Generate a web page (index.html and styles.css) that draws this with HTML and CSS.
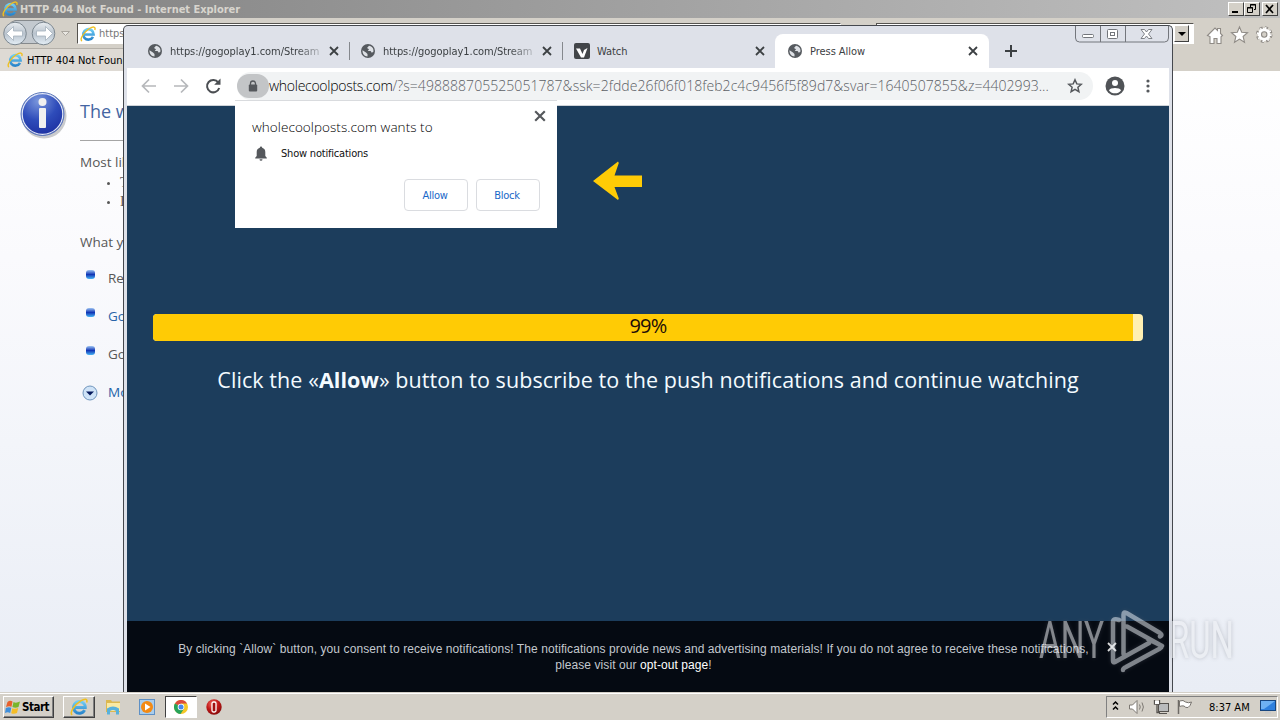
FILE: index.html
```
<!DOCTYPE html>
<html lang="en">
  <head>
    <meta charset="utf-8">
    <title>Press Allow</title>
    <link rel="stylesheet" href="styles.css">
  </head>
  <body>
    <!-- shared icons -->
    <svg class="sprite" width="0" height="0">
      <defs>
        <linearGradient id="ieBlue" x1="0" y1="0" x2="0" y2="1">
          <stop offset="0" stop-color="#6fcdf5"/>
          <stop offset="1" stop-color="#2a86cc"/>
        </linearGradient>
        <radialGradient id="infoBlue" cx="0.4" cy="0.2" r="0.9">
          <stop offset="0" stop-color="#7b97dc"/>
          <stop offset="0.5" stop-color="#2e4cba"/>
          <stop offset="1" stop-color="#1a2a9c"/>
        </radialGradient>
        <linearGradient id="navBtn" x1="0" y1="0" x2="0" y2="1">
          <stop offset="0" stop-color="#e9edf1"/>
          <stop offset="0.5" stop-color="#b9c3cd"/>
          <stop offset="1" stop-color="#e4eef6"/>
        </linearGradient>
        <radialGradient id="operaRed" cx="0.4" cy="0.3" r="0.8">
          <stop offset="0" stop-color="#f06a60"/>
          <stop offset="0.5" stop-color="#c01818"/>
          <stop offset="1" stop-color="#780808"/>
        </radialGradient>
      </defs>
      <symbol id="ie" viewBox="0 0 16 16">
        <path d="M13 10.8A5.2 5.2 0 1 1 13.6 8.5H4" fill="none" stroke="url(#ieBlue)" stroke-width="2.6"/>
        <path d="M2 15C-1 13.500 4 6 9.500 2.500 13 .4 16 .3 14.800 4" fill="none" stroke="#f0c020" stroke-width="1.400"/>
      </symbol>
      <symbol id="globe" viewBox="0 0 14 14">
        <circle cx="7" cy="7" r="7" fill="#565a5f"/>
        <path d="M1.500 6.200 5 8.500 6.500 10v2.500C3.500 12.300 1.300 9.800 1.500 6.200zM8 1.700 6 4l2 1.200L6.800 7h2.800l1.200 1.700 1.600-1C13 4.600 11 2 8 1.700z" fill="#dee1e6"/>
      </symbol>
      <symbol id="close" viewBox="0 0 10 10">
        <path d="M1 1l8 8M9 1L1 9" stroke="currentColor" stroke-width="1.800"/>
      </symbol>
    </svg>

    <div class="desktop">
      <div class="ie">
        <div class="ie-title">
          <svg class="ie-icon" width="16" height="16"><use href="#ie"/></svg>
          <span class="ie-caption">HTTP 404 Not Found - Internet Explorer</span>
          <div class="win-btns">
            <div class="win-btn"><svg width="12" height="10"><path d="M2 8h6" stroke="#000" stroke-width="2"/></svg></div>
            <div class="win-btn"><svg width="12" height="10" fill="none" stroke="#000"><path d="M4.500 3V.5h5v5H8M4 1h6M1.500 3.500h5v5h-5zM1 4h6"/></svg></div>
            <div class="win-btn win-btn-close"><svg width="12" height="10"><path d="M2 1l7 8M9 1L2 9" stroke="#000" stroke-width="1.700"/></svg></div>
          </div>
        </div>
        <div class="ie-nav">
          <svg class="ie-arrows" width="74" height="30">
            <path d="M15 2.500h27a12 12 0 0 1 0 23H15a12 12 0 0 1 0-23z" fill="#c3c9cf" stroke="#85898c"/>
            <circle cx="15" cy="15.500" r="11.300" fill="url(#navBtn)" stroke="#7c8790"/>
            <circle cx="43.500" cy="15.500" r="11.300" fill="url(#navBtn)" stroke="#7c8790"/>
            <path d="M6.500 15.500l7-7v4.500h9v5h-9v4.500zM52.500 15.500l-7-7v4.500h-9v5h9v4.500z" fill="#fff" stroke="#a5b1bd" stroke-width=".8"/>
            <path d="M61.500 13.500h8l-4 4z" fill="#e9e7e2" stroke="#aaa69f"/>
          </svg>
          <div class="ie-field ie-address">
            <svg width="16" height="16"><use href="#ie"/></svg>
            <span>https</span>
          </div>
          <div class="ie-field ie-search">
            <div class="ie-drop"></div>
          </div>
          <svg class="ie-tools" width="70" height="22" fill="#fff" stroke="#8f8b86" stroke-width="1.100">
            <path d="M2.500 11.500L10 4l2.500 2.500V4.500h3v5l2 2-1.500 1.200v6.800h-4v-5H9v5H5v-7z"/>
            <path d="M34.500 3l2.200 5.300 5.800.4-4.400 3.800 1.400 5.700-5-3.100-5 3.100 1.400-5.700-4.400-3.800 5.800-.4z"/>
            <circle cx="59.200" cy="10.500" r="6.500" stroke-width="3.600" stroke-dasharray="2.800 2.300"/>
            <circle cx="59.200" cy="10.500" r="4.500" fill="none" stroke="#fff" stroke-width="3"/>
            <circle cx="59.200" cy="10.500" r="6.200" fill="none" stroke="#fff" stroke-width="2.600" stroke-dasharray="1.500 3.370"/>
            <circle cx="59.200" cy="10.500" r="2.700" fill="#d4d0c8"/>
          </svg>
        </div>
        <div class="ie-tabs">
          <div class="ie-tab">
            <svg width="16" height="16"><use href="#ie"/></svg>
            <span>HTTP 404 Not Found</span>
          </div>
        </div>
        <div class="ie-page">
          <svg class="info-icon" width="48" height="50">
            <circle cx="24" cy="25" r="22.500" fill="#b3b5b8" opacity=".7"/>
            <circle cx="22.500" cy="23" r="21.500" fill="url(#infoBlue)" stroke="#5d79b9"/>
            <circle cx="22.500" cy="23" r="20.300" fill="none" stroke="#e2e8f6" stroke-width="1.200"/>
            <circle cx="22.500" cy="11" r="4" fill="#f0f0f0"/>
            <rect x="19" y="17" width="7" height="20" rx="1" fill="#f0f0f0"/>
          </svg>
          <div class="ie-text">
            <h1>The webpage cannot be found</h1>
            <p class="likely">Most likely causes:</p>
            <ul class="causes">
              <li>There might be a typing error in the address.</li>
              <li>If you clicked on a link, it may be out of date.</li>
            </ul>
            <p class="try">What you can try:</p>
            <div class="option"><i class="bullet"></i><span>Retype the address.</span></div>
            <div class="option"><i class="bullet"></i><a>Go back to the previous page.</a></div>
            <div class="option"><i class="bullet"></i><span>Go to the main site.</span></div>
            <div class="option">
              <svg class="more-icon" width="16" height="16"><circle cx="8" cy="8" r="7" fill="#cfe3f7" stroke="#7196bd"/><path d="M4 6.500h8l-4 4z" fill="#05195c"/></svg>
              <a class="more">More information</a>
            </div>
          </div>
        </div>
      </div>

      <div class="chrome">
        <svg class="caption-btns" width="95" height="17" fill="none" stroke="#73767c">
          <path d="M.5 0v12q0 4 4 4h85q4 0 4-4V0M25.500 0v16M50.500 0v16" />
          <rect x="7.500" y="8.500" width="11" height="3" rx="1" fill="#fff"/>
          <rect x="32.500" y="3.500" width="10" height="9" rx="1" fill="#fff"/>
          <rect x="35.500" y="6.500" width="4" height="3"/>
          <path d="M66 3.500h3.500L71.500 6l2-2.500H77L73.500 8l3.500 4.500h-3.500l-2-2.500-2 2.500H66L69.500 8z" fill="#fff" stroke-width=".9"/>
        </svg>
        <div class="tabs">
          <div class="tab">
            <svg width="14" height="14"><use href="#globe"/></svg>
            <span class="tab-title faded">https://gogoplay1.com/Stream</span>
            <svg class="tab-close" width="10" height="10"><use href="#close"/></svg>
          </div>
          <div class="tab">
            <svg width="14" height="14"><use href="#globe"/></svg>
            <span class="tab-title faded">https://gogoplay1.com/Stream</span>
            <svg class="tab-close" width="10" height="10"><use href="#close"/></svg>
          </div>
          <div class="tab">
            <svg width="16" height="16"><rect width="16" height="16" rx="2" fill="#424549"/><path d="M2 5.500h4L8.500 11 10 7l3.500-2L10 14.500H7z" fill="#fff"/></svg>
            <span class="tab-title tab-title-watch">Watch</span>
            <svg class="tab-close" width="10" height="10"><use href="#close"/></svg>
          </div>
          <div class="tab active">
            <svg width="14" height="14"><use href="#globe"/></svg>
            <span class="tab-title">Press Allow</span>
            <svg class="tab-close" width="10" height="10"><use href="#close"/></svg>
          </div>
          <svg class="new-tab" width="12" height="12"><path d="M6 0v12M0 6h12" stroke="#3c4043" stroke-width="2"/></svg>
        </div>
        <div class="toolbar">
          <svg class="nav-icons" width="82" height="18" fill="none" stroke-width="1.700">
            <path d="M16 9H3M9 2.500L2.500 9 9 15.500M34 9h13M41 2.500L47.500 9 41 15.500" stroke="#b6b8bb"/>
            <path d="M78.300 5.500A6.200 6.200 0 1 0 79.200 11" stroke="#4b4e52" stroke-width="2"/>
            <path d="M80.500 1.500v6.300h-6.300z" fill="#4b4e52"/>
          </svg>
          <div class="omnibox">
            <div class="lock">
              <svg width="10" height="12"><path d="M2.500 5V3.500a2.500 2.500 0 0 1 5 0V5" fill="none" stroke="#55585c" stroke-width="1.300"/><rect x=".8" y="4.500" width="8.400" height="7" rx="1" fill="#55585c"/></svg>
            </div>
            <div class="url"><span class="host">wholecoolposts.com</span><span class="query">/?s=498888705525051787&amp;ssk=2fdde26f06f018feb2c4c9456f5f89d7&amp;svar=1640507855&amp;z=4402993...</span></div>
            <svg class="star" width="16" height="16"><path d="M8 1.800l1.800 4.100 4.500.4-3.400 3 1 4.400L8 11.400l-3.900 2.300 1-4.400-3.400-3 4.500-.4z" fill="none" stroke="#55585c" stroke-width="1.500"/></svg>
          </div>
          <svg class="avatar" width="20" height="20"><circle cx="10" cy="10" r="9.500" fill="#505357"/><circle cx="10" cy="7" r="3" fill="#fff"/><path d="M4 14.500c1-3.200 11-3.200 12 0-3 3.800-9 3.800-12 0z" fill="#fff"/></svg>
          <svg class="kebab" width="4" height="14" fill="#55585c"><circle cx="2" cy="2" r="1.600"/><circle cx="2" cy="7" r="1.600"/><circle cx="2" cy="12" r="1.600"/></svg>
        </div>
        <div class="page">
          <svg class="arrow" width="50" height="40"><path d="M0 20L25 .5l.8 1.500L21.500 14.500H49V26H21.500l4.300 11.500-.8 1.500z" fill="#ffcb05"/></svg>
          <div class="progress">
            <div class="progress-fill"></div>
            <span class="progress-label">99%</span>
          </div>
          <p class="message">Click the «<b>Allow</b>» button to subscribe to the push notifications and continue watching</p>
          <div class="consent">
            <p>By clicking `Allow` button, you consent to receive notifications! The notifications provide news and advertising materials! If you do not agree to receive these notifications,<br>please visit our <a>opt-out page</a>!</p>
            <svg class="consent-close" width="10" height="10"><use href="#close"/></svg>
          </div>
        </div>
        <div class="prompt">
          <svg class="prompt-close" width="12" height="12" viewBox="0 0 10 10"><use href="#close"/></svg>
          <div class="prompt-title">wholecoolposts.com wants to</div>
          <div class="prompt-row">
            <svg width="12" height="15"><path d="M6 .5a1.200 1.200 0 0 1 1.200 1.200C9.300 2.300 10.300 4 10.300 6v4l1.500 1.800v.7H.2v-.7L1.700 10V6c0-2 1-3.700 3.100-4.300A1.200 1.200 0 0 1 6 .5zM4.500 13.200h3a1.500 1.500 0 0 1-3 0z" fill="#55585c"/></svg>
            <span>Show notifications</span>
          </div>
          <div class="prompt-actions">
            <button>Allow</button>
            <button>Block</button>
          </div>
        </div>
      </div>

      <div class="taskbar">
        <div class="start">
          <svg width="16" height="16"><path d="M2.500 3Q5 .8 7.500 2.500L6.500 7.700Q4 6.500 1 8z" fill="#e8602c"/><path d="M8.500 3Q11 4.500 15 2.500L13.500 8Q10.500 9.600 7.400 8z" fill="#79b52c"/><path d="M.8 9Q4 7.500 6.300 8.800L5.200 14Q2.700 12.700 0 14z" fill="#3f8fdb"/><path d="M7.300 9.200Q10 10.500 13.200 9L12 14Q9 15.500 6.200 14.200z" fill="#f5bd26"/></svg>
          <span>Start</span>
        </div>
        <div class="task task-ie"><svg width="18" height="18" viewBox="0 0 16 16"><use href="#ie"/></svg></div>
        <svg class="task-folder" width="16" height="16"><path d="M1 1h5l1 1.500h8V13H1z" fill="#dcb850"/><path d="M2 4h13v8H2z" fill="#f9e9a3"/><path d="M2 15.500V9.500Q8 5.500 14 9.500v6h-3V12q-3-2-6 0v3.500z" fill="#58b1dc"/></svg>
        <svg class="task-media" width="16" height="16"><rect x=".5" y=".5" width="15" height="15" fill="#a9cdec" stroke="#5e90c5"/><circle cx="8" cy="8" r="6" fill="#f38a13"/><path d="M6 4.500v7L11.500 8z" fill="#fff"/></svg>
        <div class="task pressed">
          <svg width="14" height="14"><circle cx="7" cy="7" r="7" fill="#f5c727"/><path d="M7 7L.9 3.500a7 7 0 0 1 12.200 0H7z" fill="#dc4a3d"/><path d="M7 7L.9 3.500A7 7 0 0 0 6.500 14L10 8.700z" fill="#27a35a"/><circle cx="7" cy="7" r="3.300" fill="#fff"/><circle cx="7" cy="7" r="2.500" fill="#4687ed"/></svg>
        </div>
        <svg class="task-opera" width="16" height="16"><circle cx="8" cy="8" r="7.700" fill="url(#operaRed)"/><rect x="6" y="3" width="4" height="10" rx="1.500" fill="#a01010" stroke="#fff" stroke-width="1.300"/></svg>
        <div class="tray">
          <svg width="84" height="18" fill="none">
            <path d="M2 6.500l2.500-2.500L7 6.500M2 11.500L4.500 9 7 11.500" stroke="#000" stroke-width="1.500"/>
            <path d="M18.500 7h3L26 2.500v13L21.500 11h-3z" fill="#fff" stroke="#7d7973"/>
            <path d="M28.500 6.500q1.500 2.500 0 5M31 4.500q2.800 4.500 0 9" stroke="#7d7973"/>
            <rect x="47.500" y="5.500" width="10" height="8" fill="#b9bbbc" stroke="#55524e"/><path d="M48 15.500h8" stroke="#55524e"/>
            <path d="M43.500 2v4h5V2M46 6v8.500h3" stroke="#55524e" stroke-width="1.300"/><rect x="44" y="3" width="4" height="3" fill="#fff"/>
            <path d="M67.500 2v14" stroke="#6d6a66" stroke-width="1.500"/><path d="M68.500 3q4-1.500 6 1 3 1.500 6 0-1 4-3.500 5.500-2.500.5-4-1.500-2-.5-4.500.5z" fill="#fff" stroke="#77736e"/>
          </svg>
          <span class="clock">8:37 AM</span>
          <svg class="show-desktop" width="16" height="14"><rect x=".5" y=".5" width="15" height="10" fill="#2f80dd" stroke="#17467f"/><path d="M1 1h14L4 9H1z" fill="#6eb1f2"/><path d="M5 12.500h6" stroke="#c9c9c9" stroke-width="2"/></svg>
        </div>
      </div>

      <svg class="watermark" width="200" height="66">
        <path d="M87.500 45V5.500q0-3 3-1.500L124 24q3 2 0 3.500M91 17.500l35 19.500M112 30l12 6q3 1.500 0 3.500L90 58q-3 1.500-3 3M83 11q-6-2-6 2v39q0 2 2 1l34-19" fill="none" stroke-linecap="round" stroke-linejoin="round"/>
        <text x="3" y="49" textLength="65" lengthAdjust="spacingAndGlyphs">ANY</text>
        <text x="133" y="49" textLength="65" lengthAdjust="spacingAndGlyphs">RUN</text>
      </svg>
    </div>
  </body>
</html>
```
FILE: styles.css
```
* {
  box-sizing: border-box;
}

body {
  margin: 0;
  overflow: hidden;
  font-family: "DejaVu Sans Condensed", "DejaVu Sans", sans-serif;
  font-size: 11px;
}

svg {
  flex: none;
}

p {
  margin: 0;
}

.sprite {
  position: absolute;
}

.desktop {
  position: relative;
  display: flex;
  flex-direction: column;
  width: 1280px;
  height: 720px;
  overflow: hidden;
  white-space: nowrap;
}

/* internet explorer window */
.ie {
  display: flex;
  flex-direction: column;
  height: 692px;
  background: #d4d0c8;
}

.ie-title {
  display: flex;
  align-items: center;
  height: 18px;
  padding: 0 2px;
  background: linear-gradient(90deg, #828282, #c0c0c0);
}

.ie-caption {
  flex: 1;
  margin-left: 2px;
  color: #d8d5ce;
  font-weight: bold;
  letter-spacing: -0.03px;
}

.win-btns {
  display: flex;
}

.win-btn {
  width: 16px;
  height: 14px;
  padding: 1px;
  background: #d4d0c8;
  border: 1px solid;
  border-color: #fff #404040 #404040 #fff;
}

.win-btn svg {
  display: block;
}

.win-btn-close {
  margin-left: 2px;
}

.ie-nav {
  display: flex;
  height: 30px;
}

.ie-field {
  height: 21px;
  margin-top: 5px;
  background: #fff;
  border: 1px solid #55534f;
  border-right-color: #fff;
  border-bottom-color: #fff;
}

.ie-address {
  display: flex;
  align-items: center;
  gap: 3px;
  width: 764px;
  margin-left: 3px;
  padding-left: 2px;
  color: #777;
}

.ie-search {
  display: flex;
  justify-content: flex-end;
  width: 318px;
  margin-left: 35px;
  padding: 1px 4px 1px 0;
}

.ie-drop {
  display: flex;
  align-items: center;
  justify-content: center;
  width: 15px;
  background: #d4d0c8;
  border: 1px solid;
  border-color: #fff #404040 #404040 #fff;
}

.ie-drop::after {
  content: "";
  border: 4px solid transparent;
  border-top-color: #000;
  border-bottom: 0;
}

.ie-tools {
  margin: 6px 0 0 11px;
}

.ie-tabs {
  height: 23px;
}

.ie-tab {
  display: flex;
  align-items: center;
  gap: 4px;
  width: 200px;
  height: 23px;
  padding-left: 7px;
  background: #dedad4;
  border-top: 1px solid #b5b1aa;
  letter-spacing: 0.05px;
}

.ie-page {
  display: flex;
  flex: 1;
  background: linear-gradient(#fff, #fafafd 30%, #f3f5fa 60%, #e9edf5);
  color: #575757;
  font-family: "Open Sans", "Noto Sans", sans-serif;
  font-size: 13.5px;
}

.info-icon {
  margin: 20px 0 0 20px;
}

.ie-text {
  width: 700px;
  margin-left: 12px;
}

.ie-text h1 {
  height: 70px;
  margin: 0 0 11px;
  padding-top: 28px;
  border-bottom: 1px solid #a5a5a5;
  color: #4465a2;
  font-size: 18px;
  font-weight: normal;
  line-height: 24px;
}

.ie-text p {
  line-height: 20px;
}

.causes {
  height: 59px;
  margin: 1px 0 0;
  padding-left: 40px;
  font-family: "Liberation Serif", serif;
  font-size: 14px;
  line-height: 19px;
}

.causes li::marker {
  font-size: 10px;
}

.option {
  display: flex;
  align-items: center;
  height: 38px;
  padding-left: 6px;
}

.try {
  margin-bottom: 7px;
}

.bullet {
  width: 9px;
  height: 9px;
  margin: 0 13px 7px 0;
  background: linear-gradient(#9dc4f3, #1135b5 50%, #47b4f5);
  border-radius: 3px;
}

.option a {
  color: #2a64a8;
}

.option .more-icon {
  margin: 1px 10px 0 -4px;
}

.option .more {
  color: #1f62a8;
}

/* chrome window */
.chrome {
  position: absolute;
  left: 123px;
  top: 25px;
  display: flex;
  flex-direction: column;
  width: 1050px;
  height: 667px;
  padding: 0 3px;
  background: #dee1e9;
  border: 1px solid #45484e;
  border-bottom: 0;
  border-radius: 5px 5px 0 0;
}

.caption-btns {
  position: absolute;
  right: 2px;
  top: 0;
}

.tabs {
  display: flex;
  align-items: center;
  height: 42px;
  padding: 8px 0 0 9px;
}

.tab {
  display: flex;
  align-items: center;
  width: 213px;
  height: 34px;
  padding-left: 12px;
  color: #3c4043;
}

.tab + .tab:not(.active) {
  background: linear-gradient(#85888d, #85888d) 0 8px / 1px 18px no-repeat;
}

.tab-title {
  width: 150px;
  margin-left: 8px;
  letter-spacing: -0.05px;
}

.tab-title-watch {
  width: 149px;
  margin-left: 7px;
}

.faded {
  -webkit-mask-image: linear-gradient(90deg, #000 84%, rgba(0, 0, 0, 0.25));
  mask-image: linear-gradient(90deg, #000 84%, rgba(0, 0, 0, 0.25));
}

.tab-close {
  margin-left: 9px;
}

.active {
  width: 214px;
  padding-left: 13px;
  background: #fff;
  border-radius: 8px 8px 0 0;
}

.active .tab-close {
  margin-left: 8px;
}

.new-tab {
  margin-left: 16px;
}

.toolbar {
  display: flex;
  align-items: center;
  height: 38px;
  padding: 0 15px 2px 13px;
  background: #fff;
  border-bottom: 1px solid #cfd3d8;
}

.omnibox {
  display: flex;
  align-items: center;
  width: 856px;
  height: 28px;
  margin-left: 15px;
  padding-right: 10px;
  background: #f1f3f4;
  border-radius: 14px;
}

.lock {
  display: flex;
  align-items: center;
  justify-content: center;
  width: 32px;
  height: 24px;
  background: #c3c5c7;
  border-radius: 12px;
}

.url {
  flex: 1;
  color: #5c6065;
  font-family: "Open Sans", "Noto Sans", sans-serif;
  font-size: 14px;
  font-weight: 300;
}

.host {
  color: #000;
  letter-spacing: -0.28px;
}

.query {
  letter-spacing: 0.05px;
}

.avatar {
  margin-left: 12px;
}

.kebab {
  margin-left: 21px;
}

.page {
  display: flex;
  flex-direction: column;
  flex: 1;
  background: #1c3d5c;
}

.arrow {
  margin: 55px 0 0 466px;
}

.progress {
  display: grid;
  width: 990px;
  height: 27px;
  margin: 113px 0 0 26px;
  background: #fff0b3;
  border-radius: 4px;
}

.progress-fill,
.progress-label {
  grid-area: 1 / 1;
}

.progress-fill {
  width: 99%;
  background: #ffcb05;
  border-radius: 4px 0 0 4px;
}

.progress-label {
  color: #220d08;
  font-family: "Trebuchet MS", "Open Sans", sans-serif;
  font-size: 20px;
  line-height: 24px;
  letter-spacing: -0.8px;
  text-align: center;
}

.message {
  margin-top: 25px;
  color: #f4fbff;
  font-family: "Trebuchet MS", "Open Sans", sans-serif;
  font-size: 21.5px;
  line-height: 28px;
  letter-spacing: 0.075px;
  text-align: center;
}

.consent {
  display: flex;
  align-items: flex-start;
  height: 71px;
  margin-top: auto;
  padding: 20px 0 0 51px;
  background: #050a12;
  color: #c3c8ce;
  font-family: "Liberation Sans", Arial, sans-serif;
  font-size: 12px;
  line-height: 16px;
  letter-spacing: 0.082px;
  text-align: center;
}

.consent p {
  width: 911px;
}

.consent a {
  color: #fff;
}

.consent-close {
  margin: 1px 0 0 18px;
  color: #e4e4e4;
}

/* notification permission bubble */
.prompt {
  position: absolute;
  left: 111px;
  top: 74px;
  width: 322px;
  height: 128px;
  padding: 16px 17px 16px 17px;
  background: #fff;
  border-top: 1px solid #d9dbde;
}

.prompt-close {
  position: absolute;
  right: 11px;
  top: 9px;
  color: #55585c;
}

.prompt-title {
  height: 20px;
  color: #000;
  font-family: "Open Sans", "Noto Sans", sans-serif;
  font-size: 13.5px;
  font-weight: 300;
  line-height: 20px;
  letter-spacing: 0.06px;
}

.prompt-row {
  display: flex;
  align-items: center;
  gap: 14px;
  height: 32px;
  padding-left: 3px;
  color: #111;
  letter-spacing: -0.2px;
}

.prompt-actions {
  display: flex;
  justify-content: flex-end;
  gap: 8px;
  margin-top: 10px;
}

.prompt button {
  width: 64px;
  height: 32px;
  padding: 0 2px 0 0;
  background: #fff;
  border: 1px solid #dadce0;
  border-radius: 4px;
  color: #1967c8;
  font: inherit;
  letter-spacing: -0.3px;
}

/* taskbar */
.taskbar {
  display: flex;
  align-items: center;
  height: 28px;
  padding: 1px 2px 0 3px;
  background: #d4d0c8;
  border-top: 1px solid #d4d0c8;
  box-shadow: inset 0 1px #fff;
}

.start,
.task {
  display: flex;
  align-items: center;
  height: 22px;
  border: 1px solid;
  border-color: #fff #404040 #404040 #fff;
  box-shadow: inset -1px -1px #808080;
}

.start {
  gap: 1px;
  width: 51px;
  padding-left: 1px;
  font-size: 11.5px;
  font-weight: bold;
  letter-spacing: -0.5px;
}

.task {
  justify-content: center;
  width: 32px;
}

.task-ie {
  margin-left: 9px;
}

.task-folder {
  margin-left: 10px;
}

.task-media {
  margin-left: 18px;
}

.pressed {
  margin-left: 10px;
  background: #fff;
  border-color: #404040 #fff #fff #404040;
  box-shadow: none;
}

.task-opera {
  margin-left: 9px;
}

.tray {
  display: flex;
  align-items: center;
  width: 172px;
  height: 22px;
  margin-left: auto;
  padding: 0 1px 0 4px;
  border: 1px solid;
  border-color: #808080 #fff #fff #808080;
}

.clock {
  margin-left: 14px;
  letter-spacing: 0;
}

.show-desktop {
  margin-left: auto;
}

/* watermark over everything */
.watermark {
  position: absolute;
  left: 1036px;
  top: 609px;
  opacity: 0.55;
  filter: drop-shadow(0 0 2px rgba(90, 95, 105, 0.6));
}

.watermark path {
  stroke: #e4e8ee;
  stroke-width: 4.5;
}

.watermark text {
  fill: #eceef2;
  font-family: Roboto, sans-serif;
  font-size: 51px;
}
```
